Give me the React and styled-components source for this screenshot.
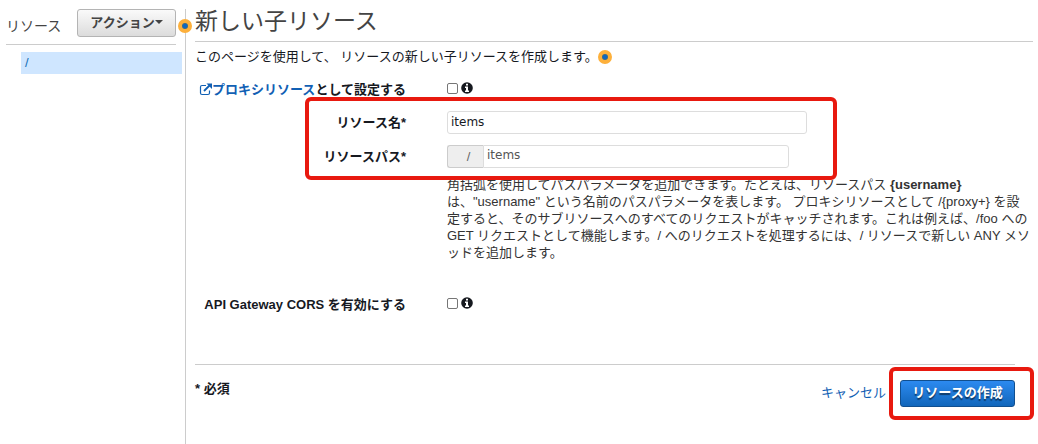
import { useId } from "react";
import styled, { createGlobalStyle } from "styled-components";

const GlobalStyle = createGlobalStyle`
  *, *::before, *::after {
    box-sizing: border-box;
  }

  body {
    margin: 0;
    background: #fff;
    color: #16191f;
    font-family: "Liberation Sans", "Noto Sans CJK JP", sans-serif;
    font-size: 13px;
    line-height: 17px;
  }
`;

const Page = styled.div`
  display: grid;
  grid-template-columns: 185px 1fr;
  min-height: 100vh;
  padding-top: 9px;
`;

const Sidebar = styled.aside`
  padding-left: 6px;
`;

const SidebarHeader = styled.header`
  display: flex;
  align-items: center;
  justify-content: space-between;
  margin-right: 9px;
  padding-bottom: 7px;
  border-bottom: 1px solid #ccc;
`;

const SidebarTitle = styled.h2`
  margin: 0;
  padding-top: 6px;
  font-size: 14px;
  font-weight: 400;
  color: #444;
`;

const ActionButton = styled.button`
  display: flex;
  align-items: center;
  justify-content: center;
  width: 99px;
  height: 28px;
  padding: 0 0 2px;
  border: 1px solid #b4b4b4;
  border-radius: 3px;
  background: linear-gradient(#fafafa, #dcdcdc);
  color: #444;
  font: inherit;
  font-weight: 700;
`;

const Caret = styled.span`
  border: 4px solid transparent;
  border-top-color: #444;
  border-bottom: 0;
`;

const ResourceLink = styled.a`
  display: block;
  margin: 7px 3px 0 15px;
  padding: 2px 4px 3px;
  background: #cfe6ff;
  color: #146eb4;
  text-decoration: none;
`;

const Main = styled.main`
  position: relative;
  padding: 0 5px 24px 9px;
  border-left: 1px solid #ccc;
`;

const Title = styled.h1`
  margin: 0;
  padding-bottom: 8px;
  border-bottom: 1px solid #ccc;
  font-size: 23px;
  font-weight: 400;
  line-height: 24px;
  color: #444;
`;

const Intro = styled.p`
  display: flex;
  align-items: center;
  margin: 6px 0 0;
`;

const Dot = styled.span`
  width: 14px;
  height: 14px;
  border: 4px solid #fdb03b;
  border-radius: 50%;
  background: radial-gradient(circle, #0f67c0 40%, #6f7043 100%);
`;

const TitleDot = styled(Dot)`
  position: absolute;
  top: 10px;
  left: -8px;
`;

const Form = styled.form`
  margin: 13px 18px 0 0;
`;

const Row = styled.div`
  display: grid;
  grid-template-columns: 211px minmax(0, 1fr);
  column-gap: 41px;
  align-items: center;
  min-height: 22px;
`;

const Label = styled.label`
  font-weight: 700;
  text-align: right;
  white-space: nowrap;
`;

const Link = styled.a`
  color: #1160b4;
  text-decoration: none;

  & svg {
    vertical-align: -2px;
  }
`;

const CheckGroup = styled.div`
  display: flex;
  align-items: center;
  gap: 3px;
  padding-bottom: 2px;
`;

const Checkbox = styled.input`
  width: 11px;
  height: 11px;
  margin: 0;
  appearance: none;
  border: 1px solid #767676;
  border-radius: 2px;
  background: #fff;

  &:checked {
    background: #146eb4;
  }
`;

const Fields = styled.div`
  position: relative;
  display: grid;
  row-gap: 11px;
  padding-top: 11px;
`;

const Highlight = styled.span`
  position: absolute;
  border: 4px solid #e8190f;
  border-radius: 6px;
  pointer-events: none;
`;

const FieldsHighlight = styled(Highlight)`
  top: -3px;
  bottom: -12px;
  left: 110px;
  width: 532px;
`;

const ButtonHighlight = styled(Highlight)`
  inset: -13px -19px;
  left: -11px;
`;

const TextInput = styled.input`
  width: 100%;
  max-width: 360px;
  height: 23px;
  padding: 0 3px 2px;
  border: 1px solid #ddd;
  border-radius: 3px;
  color: ${(p) => (p.$muted ? "#555" : "#16191f")};
  font-family: "DejaVu Sans", sans-serif;
  font-size: 12px;
`;

const PathGroup = styled.div`
  display: flex;
  max-width: 342px;

  & input {
    border-radius: 0 3px 3px 0;
    padding-bottom: 4px;
  }
`;

const Prefix = styled.span`
  flex: none;
  width: 36px;
  padding: 2px 0 0 6px;
  border: 1px solid #ccc;
  border-right: 0;
  border-radius: 3px 0 0 3px;
  background: #eee;
  color: #666;
  text-align: center;
`;

const Help = styled.p`
  grid-column: 2;
  margin: 0 -20px 0 0;
  color: #333;
`;

const HelpRow = styled(Row)`
  margin: 8px 0 32px;
`;

const Footer = styled.footer`
  display: flex;
  align-items: flex-start;
  justify-content: space-between;
  margin-top: 49px;
  padding-top: 15px;
  border-top: 1px solid #ccc;
`;

const Required = styled.strong`
  font-weight: 700;
`;

const Buttons = styled.div`
  display: flex;
  align-items: center;
  gap: 14px;

  & > a {
    padding-bottom: 2px;
  }
`;

const ButtonWrapper = styled.div`
  position: relative;
`;

const SubmitButton = styled.button`
  width: 115px;
  height: 27px;
  padding: 0 0 2px;
  border: 1px solid #114f8f;
  border-radius: 3px;
  background: linear-gradient(#2c8af0, #1166bb);
  color: #fff;
  font: inherit;
  font-weight: 700;
  text-shadow: 0 2px 1px rgba(0, 0, 0, 0.5);
`;

function ExternalIcon() {
  return (
    <svg width="13" height="13" viewBox="0 0 13 13" fill="none" aria-hidden="true">
      <path
        d="M7 2.5H3Q1.5 2.5 1.5 4v6Q1.5 11.5 3 11.5h6Q10.5 11.5 10.5 10V7.5"
        stroke="#1160b4"
        strokeWidth="1.2"
      />
      <path d="M5 8l5.500-5.500" stroke="#1160b4" strokeWidth="1.800" />
      <path d="M7.500 .5H13V6z" fill="#1160b4" />
    </svg>
  );
}

function InfoIcon() {
  return (
    <svg width="12" height="12" viewBox="0 0 12 12" aria-hidden="true">
      <circle cx="6" cy="6" r="5.8" fill="#16191f" />
      <path d="M5 1.8h2v1.700H5zM4 4.500h3v3.900h1v1.500H4V8.400h1V6H4z" fill="#fff" />
    </svg>
  );
}

function CheckRow({ label }) {
  const id = useId();

  return (
    <Row>
      <Label htmlFor={id}>{label}</Label>
      <CheckGroup>
        <Checkbox id={id} type="checkbox" />
        <InfoIcon />
      </CheckGroup>
    </Row>
  );
}

function App() {
  return (
    <>
      <GlobalStyle />
      <Page>
        <Sidebar>
          <SidebarHeader>
            <SidebarTitle>リソース</SidebarTitle>
            <ActionButton type="button">
              アクション
              <Caret />
            </ActionButton>
          </SidebarHeader>
          <ResourceLink href="#root">/</ResourceLink>
        </Sidebar>

        <Main>
          <TitleDot />
          <Title>新しい子リソース</Title>
          <Intro>
            このページを使用して、 リソースの新しい子リソースを作成します。
            <Dot />
          </Intro>

          <Form onSubmit={(e) => e.preventDefault()}>
            <CheckRow
              label={
                <>
                  <Link href="#proxy">
                    <ExternalIcon />
                    プロキシリソース
                  </Link>
                  として設定する
                </>
              }
            />

            <Fields>
              <Row>
                <Label htmlFor="name">リソース名*</Label>
                <TextInput id="name" defaultValue="items" />
              </Row>
              <Row>
                <Label htmlFor="path">リソースパス*</Label>
                <PathGroup>
                  <Prefix>/</Prefix>
                  <TextInput id="path" defaultValue="items" $muted />
                </PathGroup>
              </Row>
              <FieldsHighlight />
            </Fields>

            <HelpRow>
              <Help>
                角括弧を使用してパスパラメータを追加できます。たとえは、リソースパス{" "}
                <b>{"{username}"}</b>
                <br />
                は、"username" という名前のパスパラメータを表します。 プロキシリソースとして
                /{"{proxy+}"} を設
                <br />
                定すると、そのサブリソースへのすべてのリクエストがキャッチされます。これは例えば、/foo
                への
                <br />
                GET リクエストとして機能します。/ へのリクエストを処理するには、/ リソースで新しい ANY
                メソ
                <br />
                ッドを追加します。
              </Help>
            </HelpRow>

            <CheckRow label="API Gateway CORS を有効にする" />

            <Footer>
              <Required>* 必須</Required>
              <Buttons>
                <Link href="#cancel">キャンセル</Link>
                <ButtonWrapper>
                  <SubmitButton type="submit">リソースの作成</SubmitButton>
                  <ButtonHighlight />
                </ButtonWrapper>
              </Buttons>
            </Footer>
          </Form>
        </Main>
      </Page>
    </>
  );
}

export default App;
